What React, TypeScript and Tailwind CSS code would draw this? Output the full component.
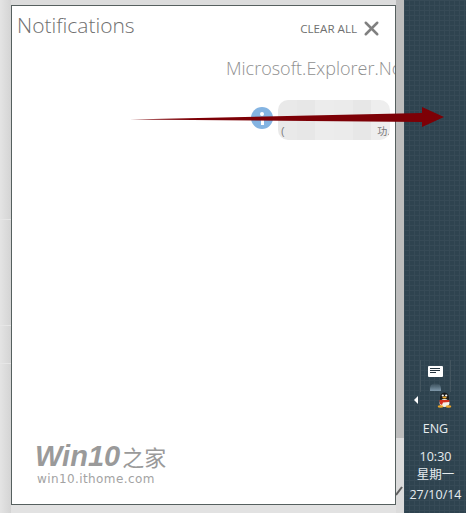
import React from "react";
import { X } from "lucide-react";

const sans = "font-['Open_Sans','Noto_Sans',sans-serif]";
const cjk = "font-['Liberation_Sans','Noto_Sans_CJK_SC',sans-serif]";

const mosaic = ["bg-[#e9e9e9]", "bg-[#e7e7e7]", "bg-[#ececec]", "bg-[#ebebeb]", "bg-[#e7e7e7]", "bg-[#eeeeee]"];

function TrayButton() {
  return (
    <div className="relative w-[31px] h-[32px] border-x border-[#43555f]">
      <div className="absolute left-[7px] top-[6px] w-[15px] h-[11px] bg-white rounded-[1px] flex flex-col gap-[1px] p-[2px]">
        <div className="h-px w-[10px] bg-[#26353f]" />
        <div className="h-px w-[10px] bg-[#26353f]" />
        <div className="h-px w-[6px] bg-[#26353f]" />
      </div>
      <div className="absolute left-[9px] bottom-[1px] w-[11px] h-[8px] rounded-t-full bg-gradient-to-t from-[#7f98aa] to-transparent" />
    </div>
  );
}

function Penguin() {
  return (
    <svg width="15" height="16" viewBox="0 0 15 16">
      <ellipse cx="7.5" cy="6" rx="4.5" ry="5.5" fill="#1b1b1b" />
      <ellipse cx="7.5" cy="11" rx="5" ry="4" fill="#f4f1e6" />
      <circle cx="5.8" cy="3.5" r="1.1" fill="#fff" />
      <circle cx="9.2" cy="3.5" r="1.1" fill="#fff" />
      <ellipse cx="7.5" cy="5.5" rx="2.2" ry="1" fill="#eba52a" />
      <path d="M2.5 8 H12.5 L12 10 L6 10.5 L5 13 L3 12 Z" fill="#d5301f" />
      <ellipse cx="3.5" cy="14.5" rx="2.8" ry="1.3" fill="#eba52a" />
      <ellipse cx="11.5" cy="14.5" rx="2.8" ry="1.3" fill="#eba52a" />
    </svg>
  );
}

function Arrow() {
  return (
    <svg className="absolute left-[130px] top-[104px]" width="316" height="28" viewBox="0 0 316 28">
      <path d="M0 15.5 L292 9 L292 3 L314 13 L292 23 L292 18 Z" fill="#7d0006" />
    </svg>
  );
}

export default function App() {
  return (
    <div className="relative w-[466px] h-[513px] overflow-hidden flex bg-[#dedede]">
      {/* left strip */}
      <div className="w-[11px] flex flex-col bg-gradient-to-r from-[#e4e4e4] to-[#d4d4d4]">
        <div className="h-[219px]" />
        <div className="h-px bg-[#e6e6e6]" />
        <div className="h-[105px]" />
        <div className="h-px bg-[#e6e6e6]" />
        <div className="h-[37px]" />
        <div className="h-px bg-[#e6e6e6]" />
      </div>

      {/* panel */}
      <div className="w-[385px] flex flex-col">
        <div className="h-[5px] shrink-0 bg-[#dcdcdc]" />
        <div className="w-[385px] h-[500px] bg-white border border-[#56605f] flex flex-col overflow-hidden">
          <div className="flex items-start justify-between pl-[5px] pr-[12px] pt-[6px]">
            <span className={`${sans} font-light text-[21px] leading-[27px] text-[#707070]`}>Notifications</span>
            <div className="flex items-center gap-[3px] pt-[2px]">
              <span className={`${sans} text-[11.6px] leading-[24px] text-[#707070] pt-[3px]`}>CLEAR ALL</span>
              <X size={23} strokeWidth={2.6} className="text-[#808080] mt-[1px]" />
            </div>
          </div>
          <div className={`${sans} font-light text-[18px] leading-[26px] text-[#909090] whitespace-nowrap pl-[214px] mt-[14px]`}>
            Microsoft.Explorer.No
          </div>
          <div className="flex items-start pl-[239px] mt-[19px] gap-[5px]">
            <div className="w-[22px] h-[22px] mt-[7px] rounded-full bg-[#84b4e2] flex flex-col items-center justify-center gap-[1px] shrink-0">
              <div className="w-[4px] h-[4px] bg-white rounded-full" />
              <div className="w-[3px] h-[8px] bg-white" />
            </div>
            <div className="relative w-[112px] h-[40px] rounded-[10px] flex overflow-hidden shrink-0">
              {mosaic.map((c, i) => (
                <div key={i} className={`flex-1 ${c}`} />
              ))}
              <span className={`${cjk} absolute left-[3px] top-[26px] text-[10px] leading-[12px] text-[#777777]`}>(</span>
              <span className={`${cjk} absolute right-0 top-[26px] text-[10px] leading-[12px] text-[#777777] whitespace-nowrap`}>功,</span>
            </div>
          </div>
          <div className="mt-auto pl-[23px] pb-[18px]">
            <div className="flex items-baseline leading-none">
              <span className="font-['Liberation_Sans',sans-serif] font-bold italic text-[29px] leading-[26px] text-[#9a9a9a]">Win10</span>
              <span className={`${cjk} text-[22px] leading-[26px] text-[#9a9a9a] ml-[2px]`}>之家</span>
            </div>
            <div className="font-['DejaVu_Sans',sans-serif] text-[12px] leading-[14px] tracking-[0.4px] text-[#a3a3a3] pl-[2px]">win10.ithome.com</div>
          </div>
        </div>
        <div className="flex-1 bg-[#e2e2e2]" />
      </div>

      {/* right strip */}
      <div className="w-[8px] flex flex-col">
        <div className="h-[438px] bg-[#bdbdbd]" />
        <div className="relative flex-1 bg-[#dcdcdc]">
          <svg className="absolute left-0 top-[46px]" width="8" height="14" viewBox="0 0 8 14">
            <path d="M0 11 L6 3" stroke="#5e5e5e" strokeWidth="2" />
          </svg>
        </div>
      </div>

      {/* taskbar */}
      <div className="w-[62px] pl-[1px] flex flex-col items-center bg-[#2e434f] bg-[linear-gradient(#364a56_1px,transparent_1px),linear-gradient(90deg,#364a56_1px,transparent_1px)] bg-[length:5px_5px]">
        <div className="mt-[360px]">
          <TrayButton />
        </div>
        <div className="flex items-center gap-[19px] mr-[5px]">
          <div className="w-0 h-0 border-y-[4px] border-y-transparent border-r-[4px] border-r-white" />
          <Penguin />
        </div>
        <div className={`${sans} text-[12.5px] leading-[16px] text-[#e6ecef] mt-[13px]`}>ENG</div>
        <div className={`${sans} text-[12.5px] leading-[19px] text-[#e6ecef] mt-[10px] text-center`}>10:30</div>
        <div className={`${cjk} text-[12.5px] leading-[19px] text-[#e6ecef] text-center`}>星期一</div>
        <div className={`${sans} text-[12.5px] leading-[19px] text-[#e6ecef] text-center`}>27/10/14</div>
      </div>

      <Arrow />
    </div>
  );
}
